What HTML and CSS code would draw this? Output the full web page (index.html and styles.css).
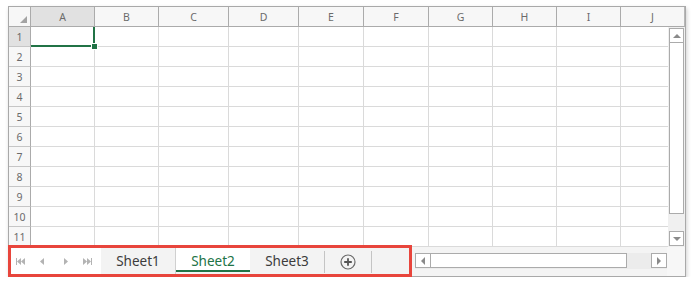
FILE: index.html
```html
<!DOCTYPE html>
<html>
<head>
<meta charset="utf-8">
<link rel="stylesheet" href="styles.css">
</head>
<body>
<div class="frame">
  <div class="header">
    <div class="hcell corner"><span class="tri"></span></div>
    <div class="hcell sel">A</div>
    <div class="hcell">B</div>
    <div class="hcell">C</div>
    <div class="hcell">D</div>
    <div class="hcell">E</div>
    <div class="hcell">F</div>
    <div class="hcell">G</div>
    <div class="hcell">H</div>
    <div class="hcell">I</div>
    <div class="hcell last">J</div>
  </div>
  <div class="body">
    <div class="rows" id="rows"></div>
    <div class="vscroll">
      <div class="vbtn"><span class="arr-up"></span></div>
      <div class="vthumb"></div>
      <div class="vspace"></div>
      <div class="vbtn"><span class="arr-down"></span></div>
    </div>
  </div>
  <div class="bottom">
    <div class="tabs">
      <div class="nav">
        <svg class="navic" width="9" height="7" viewBox="0 0 9 7"><rect x="0" y="0" width="1" height="7"/><path d="M1 3.5L5 0V7Z M5 3.5L9 0V7Z"/></svg>
        <svg class="navic" width="4" height="7" viewBox="0 0 4 7"><path d="M0 3.5L4 0V7Z"/></svg>
        <svg class="navic" width="4" height="7" viewBox="0 0 4 7"><path d="M4 3.5L0 0V7Z"/></svg>
        <svg class="navic" width="9" height="7" viewBox="0 0 9 7"><path d="M0 0L4 3.5L0 7Z M4 0L8 3.5L4 7Z"/><rect x="8" y="0" width="1" height="7"/></svg>
      </div>
      <div class="tab t1">Sheet1</div>
      <div class="tab t2 active">Sheet2</div>
      <div class="tab t3">Sheet3</div>
      <div class="sep"></div>
      <div class="add">
        <svg width="16" height="16" viewBox="0 0 16 16"><circle cx="8" cy="8" r="7" fill="none" stroke="#6a6a6a" stroke-width="1.2"/><path d="M8 4.2V11.8M4.2 8H11.8" stroke="#555" stroke-width="1.8"/></svg>
      </div>
      <div class="sep"></div>
      <div class="highlight"></div>
    </div>
    <div class="hscroll">
      <div class="hbtn"><span class="arr-left"></span></div>
      <div class="hthumb"></div>
      <div class="hspace"></div>
      <div class="hbtn"><span class="arr-right"></span></div>
    </div>
    <div class="cornerbox"></div>
  </div>
</div>
<script src="app.js"></script>
</body>
</html>
```

FILE: styles.css
```css
* { box-sizing: border-box; }
html, body { margin: 0; background: #ffffff; }
body {
  padding: 6px 0 0 8px;
  font-family: "Noto Sans", "Open Sans", sans-serif;
}
.frame {
  width: 678px;
  border: 1px solid #a9a9a9;
  background: #fff;
  box-shadow: 1px 2px 4px rgba(0,0,0,0.18);
  display: flex;
  flex-direction: column;
}
.header, .rows {
  display: grid;
  grid-template-columns: 22px 64px 64px 70px 70px 65px 65px 64px 64px 64px 64px;
}
.header { height: 20px; grid-template-rows: 20px; }
.hcell {
  background: #f7f7f7;
  border-right: 1px solid #ababab;
  border-bottom: 1px solid #ababab;
  color: #6b6b6b;
  font-size: 10.5px;
  display: flex;
  align-items: center;
  justify-content: center;
  padding-top: 1px;
}
.hcell.last { border-right: 1px solid #b8b8b8; }
.hcell.sel, .rh.sel { background: #e1e1e1; }
.corner { position: relative; }
.tri {
  position: absolute;
  right: 3px;
  bottom: 3px;
  width: 0; height: 0;
  border-left: 7px solid transparent;
  border-bottom: 7px solid #a3a3a3;
}
.body { display: flex; height: 220px; }
.rows {
  width: 659px;
  overflow: hidden;
  grid-auto-rows: 20px;
}
.rh {
  background: #f7f7f7;
  border-right: 1px solid #ababab;
  border-bottom: 1px solid #c6c6c6;
  color: #6b6b6b;
  font-size: 10.5px;
  display: flex;
  align-items: center;
  justify-content: center;
  padding-top: 1px;
}
.cell {
  border-right: 1px solid #dadada;
  border-bottom: 1px solid #dadada;
}
.cell.active {
  position: relative;
  border-right: 2px solid #217346;
  border-bottom: 2px solid #217346;
}
.handle {
  position: absolute;
  right: -5px;
  bottom: -5px;
  width: 7px;
  height: 7px;
  background: #217346;
  border: 1px solid #fff;
}
.vscroll {
  width: 17px;
  background: #f0f0f0;
  display: flex;
  flex-direction: column;
  padding: 1px;
}
.vbtn {
  height: 15px;
  border: 1px solid #ababab;
  background: #fff;
  display: flex;
  align-items: center;
  justify-content: center;
}
.vthumb {
  height: 171px;
  border: 1px solid #ababab;
  border-top: none;
  background: #fff;
}
.vspace { flex: 1; }
.arr-up { width: 0; height: 0; border-left: 4px solid transparent; border-right: 4px solid transparent; border-bottom: 4px solid #8a8a8a; }
.arr-down { width: 0; height: 0; border-left: 4px solid transparent; border-right: 4px solid transparent; border-top: 4px solid #8a8a8a; }
.arr-left { width: 0; height: 0; border-top: 4px solid transparent; border-bottom: 4px solid transparent; border-right: 4px solid #8a8a8a; }
.arr-right { width: 0; height: 0; border-top: 4px solid transparent; border-bottom: 4px solid transparent; border-left: 4px solid #8a8a8a; }
.bottom {
  height: 29px;
  display: flex;
  background: #f4f4f4;
}
.tabs {
  position: relative;
  width: 402px;
  display: flex;
  align-items: stretch;
  background: #f3f3f3;
}
.nav {
  width: 92px;
  background: #fff;
  display: flex;
  align-items: center;
  padding-left: 7px;
}
.navic { fill: #b3b3b3; display: block; }
.nav .navic:nth-child(1) { margin-right: 15px; }
.nav .navic:nth-child(2) { margin-right: 20px; }
.nav .navic:nth-child(3) { margin-right: 15px; }
.tab {
  display: flex;
  align-items: center;
  justify-content: center;
  font-size: 13.5px;
  color: #3c3c3c;
  padding-bottom: 1px;
}
.t1 { width: 74px; }
.t2 { width: 75px; }
.t3 { width: 74px; }
.tab.active {
  background: #fff;
  color: #217346;
  box-shadow: inset 0 -4px 0 #f3f3f3, inset 0 -6px 0 #217346;
  border-left: 1px solid #d0d0d0;
}
.sep {
  width: 1px;
  background: #c4c4c4;
  margin: 4px 0 3px;
}
.add {
  width: 46px;
  display: flex;
  align-items: center;
  justify-content: center;
}
.highlight {
  position: absolute;
  top: -2px;
  left: -1px;
  right: -1px;
  bottom: -1px;
  border: 3px solid #e8453c;
  pointer-events: none;
}
.hscroll {
  margin-left: 4px;
  width: 252px;
  margin-top: 6px;
  height: 16px;
  display: flex;
  background: #ececec;
}
.hbtn {
  width: 16px;
  height: 15px;
  border: 1px solid #ababab;
  background: #fff;
  display: flex;
  align-items: center;
  justify-content: center;
}
.hthumb {
  width: 196px;
  height: 15px;
  border: 1px solid #ababab;
  border-left: none;
  background: #fff;
}
.hspace { flex: 1; }
.cornerbox { flex: 1; background: #f7f7f7; }
```

FILE: app.js
```js
var rows = document.getElementById('rows');
var html = '';
for (var r = 1; r <= 11; r++) {
  html += '<div class="rh' + (r === 1 ? ' sel' : '') + '">' + r + '</div>';
  for (var c = 0; c < 10; c++) {
    if (r === 1 && c === 0) {
      html += '<div class="cell active"><span class="handle"></span></div>';
    } else {
      html += '<div class="cell"></div>';
    }
  }
}
rows.innerHTML = html;
```
